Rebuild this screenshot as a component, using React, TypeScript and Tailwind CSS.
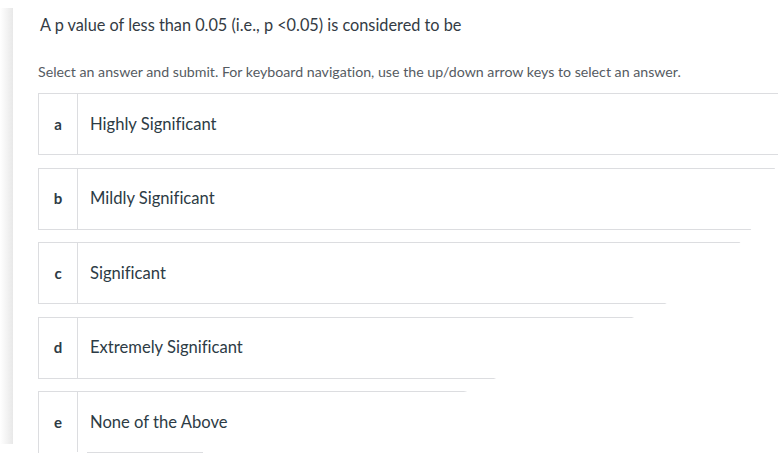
import React from "react";

const options = [
  { k: "a", t: "Highly Significant" },
  { k: "b", t: "Mildly Significant" },
  { k: "c", t: "Significant" },
  { k: "d", t: "Extremely Significant" },
  { k: "e", t: "None of the Above" },
];

export default function App() {
  return (
    <div
      className="relative w-[778px] h-[453px] overflow-hidden bg-white [font-variant-ligatures:none]"
      style={{ fontFamily: "Lato, 'Open Sans', sans-serif" }}
    >
      <div className="flex">
        <div className="w-[13px] shrink-0 mt-[8px] h-[436px] bg-gradient-to-r from-white to-[#e8e8e8]" />
        <div className="flex-1 pl-[25px]">
          <div className="pt-[14px] pl-[2px] text-[16.3px] leading-[22px] text-[#333b44] whitespace-nowrap">
            A p value of less than 0.05 (i.e., p &lt;0.05) is considered to be
          </div>
          <div className="mt-[27px] text-[14.2px] leading-[18px] text-[#555b62] whitespace-nowrap">
            Select an answer and submit. For keyboard navigation, use the up/down arrow keys to select an answer.
          </div>
          <div className="mt-[12px] flex flex-col gap-[12.5px] w-[800px]">
            {options.map((o) => (
              <div
                key={o.k}
                className="flex h-[62px] border border-[#dcdde0] text-[#2d3b45]"
              >
                <div className="w-[39px] shrink-0 border-r border-[#dcdde0] flex items-center justify-center font-bold text-[15px]">
                  {o.k}
                </div>
                <div className="flex items-center pl-[12px] text-[16.6px]">{o.t}</div>
              </div>
            ))}
          </div>
        </div>
      </div>
      <svg
        className="absolute left-0 top-0 pointer-events-none"
        width="778"
        height="453"
        viewBox="0 0 778 453"
      >
        <polygon
          fill="#ffffff"
          points="778,156 775,168 751,229.5 740,242.5 666,303.5 633,317.5 495,378.5 466,391.5 203,452 203,453 778,453"
        />
        <rect x="0" y="444" width="37" height="9" fill="#ffffff" />
        <rect x="39" y="452" width="48" height="1" fill="#ffffff" />
      </svg>
    </div>
  );
}
